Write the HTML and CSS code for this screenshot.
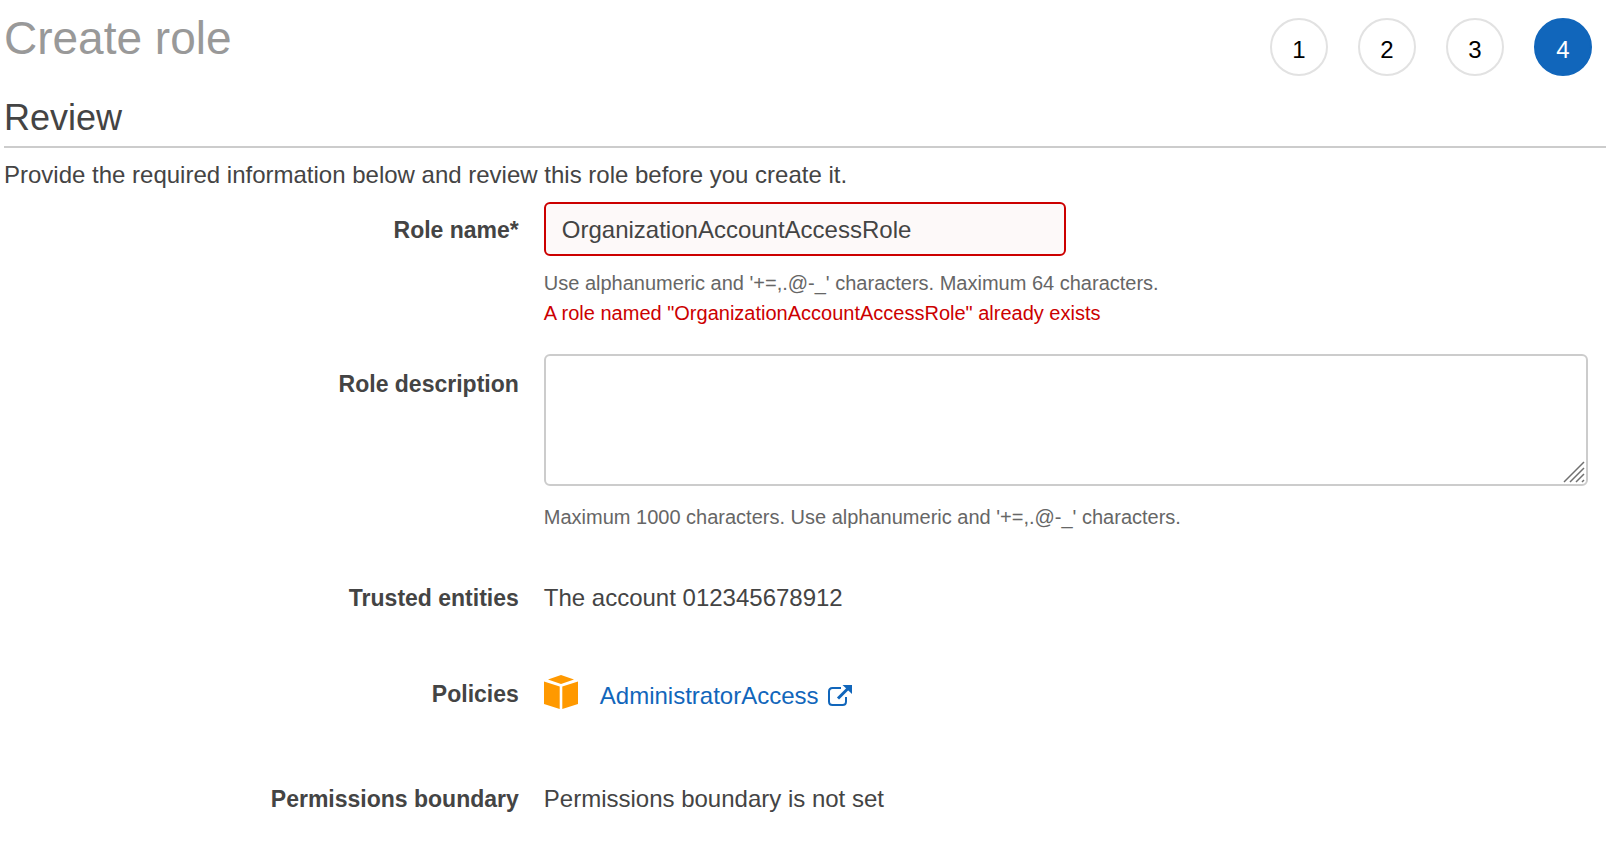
FILE: index.html
```html
<!DOCTYPE html>
<html lang="en">
<head>
<meta charset="utf-8">
<title>Create role</title>
<link rel="stylesheet" href="styles.css">
</head>
<body>
<main class="page">
  <header class="page-header">
    <h1 class="page-title">Create role</h1>
    <ol class="steps">
      <li class="step">1</li>
      <li class="step">2</li>
      <li class="step">3</li>
      <li class="step step-current" aria-current="step">4</li>
    </ol>
  </header>
  <h2 class="section-title">Review</h2>
  <p class="intro">Provide the required information below and review this role before you create it.</p>
  <form class="form">
    <div class="row row-name">
      <label class="label" for="role-name">Role name*</label>
      <div class="field">
        <input class="text-input" id="role-name" type="text" value="OrganizationAccountAccessRole" aria-invalid="true" aria-describedby="name-hint name-error">
        <p class="hint" id="name-hint">Use alphanumeric and '+=,.@-_' characters. Maximum 64 characters.</p>
        <p class="hint error" id="name-error">A role named "OrganizationAccountAccessRole" already exists</p>
      </div>
    </div>
    <div class="row row-description">
      <label class="label" for="role-description">Role description</label>
      <div class="field">
        <div class="textarea-wrap">
          <textarea class="textarea" id="role-description" aria-describedby="description-hint"></textarea>
          <svg class="grip" viewBox="0 0 22 22" aria-hidden="true"><path d="M1 21 21 1M7 21 21 7M13 21l8-8M19 21l2-2"/></svg>
        </div>
        <p class="hint" id="description-hint">Maximum 1000 characters. Use alphanumeric and '+=,.@-_' characters.</p>
      </div>
    </div>
    <div class="row row-trusted">
      <span class="label">Trusted entities</span>
      <span class="field">The account 012345678912</span>
    </div>
    <div class="row row-policies">
      <span class="label">Policies</span>
      <div class="field policy">
        <svg class="cube" viewBox="0 0 34 34" aria-hidden="true"><path d="M17 0 30 4.500 17 9 4 4.500zM0 6.500 15.700 11.500V34L0 29zM34 6.500 18.300 11.500V34L34 29z"/></svg>
        <a class="link" href="#">AdministratorAccess<svg class="external" viewBox="0 0 26 24" aria-hidden="true"><path class="external-box" d="M14 4H5.500Q2 4 2 7.500V17.500Q2 21 5.500 21H15.500Q19 21 19 17.500V13"/><path class="external-shaft" d="M11 14.500 21 4.500"/><path class="external-head" d="M15.500 1H25V10z"/></svg></a>
      </div>
    </div>
    <div class="row row-boundary">
      <span class="label">Permissions boundary</span>
      <span class="field">Permissions boundary is not set</span>
    </div>
  </form>
</main>
</body>
</html>
```
FILE: styles.css
```css
* {
  box-sizing: border-box;
}

body {
  margin: 0;
  background: #fff;
  color: #444;
  font-family: "Liberation Sans", Arial, sans-serif;
  font-size: 24px;
  line-height: 32px;
}

h1, h2, p, ol {
  margin: 0;
  padding: 0;
  font-weight: normal;
}

.page {
  padding: 10px 14px 28px 4px;
}

.page-header {
  display: flex;
  justify-content: space-between;
  align-items: flex-start;
  padding-right: 14px;
}

.page-title {
  color: #999;
  font-size: 46px;
  font-weight: normal;
  line-height: 56px;
}

.steps {
  display: flex;
  gap: 30px;
  padding-top: 8px;
  list-style: none;
}

.step {
  width: 58px;
  height: 58px;
  padding-top: 2px;
  border: 2px solid #e2e2e2;
  border-radius: 50%;
  color: #000;
  line-height: 56px;
  text-align: center;
}

.step-current {
  border-color: #1166bb;
  background: #1166bb;
  color: #fff;
}

.section-title {
  padding: 18px 0 4px;
  border-bottom: 2px solid #ccc;
  font-size: 36px;
  line-height: 48px;
}

.intro {
  padding-top: 11px;
}

.row {
  display: grid;
  grid-template-columns: 32.5% 1fr;
  column-gap: 25px;
  align-items: start;
  padding-right: 18px;
}

.label {
  font-size: 23px;
  font-weight: bold;
  text-align: right;
}

.row-name {
  padding-top: 11px;
}

.row-name .label {
  padding-top: 12px;
}

.row-description .label {
  padding-top: 14px;
}

.text-input {
  display: block;
  width: 50%;
  height: 54px;
  margin-bottom: 12px;
  padding: 2px 16px 0;
  border: 2px solid #cc0000;
  border-radius: 6px;
  background: #fdf9f9;
  color: #444;
  font: inherit;
}

.hint {
  color: #666;
  font-size: 20px;
  line-height: 30px;
}

.error {
  color: #cc0000;
}

.row-description {
  padding-top: 26px;
}

.textarea-wrap {
  position: relative;
  margin-bottom: 16px;
}

.textarea {
  display: block;
  width: 100%;
  height: 132px;
  padding: 10px 16px;
  border: 2px solid #ccc;
  border-radius: 6px;
  background: #fff;
  color: #444;
  font: inherit;
  resize: none;
}

.grip {
  position: absolute;
  right: 3px;
  bottom: 3px;
  width: 22px;
  height: 22px;
  fill: none;
  stroke: #707070;
  stroke-width: 1.5;
  pointer-events: none;
}

.row-trusted {
  padding-top: 50px;
}

.row-policies {
  padding-top: 61px;
}

.row-policies .label {
  padding-top: 3px;
}

.policy {
  display: flex;
  gap: 22px;
}

.cube {
  width: 34px;
  height: 34px;
  fill: #ff9900;
}

.link {
  display: flex;
  align-items: center;
  gap: 8px;
  padding-top: 5px;
  color: #1166bb;
  text-decoration: none;
}

.external {
  width: 26px;
  height: 24px;
  fill: none;
  stroke: #1166bb;
}

.external-box {
  stroke-width: 2;
}

.external-shaft {
  stroke-width: 3;
}

.external-head {
  fill: #1166bb;
  stroke: none;
}

.row-boundary {
  padding-top: 71px;
}
```
